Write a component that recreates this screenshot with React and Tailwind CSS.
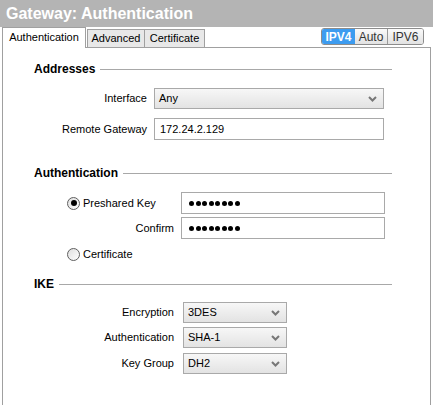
import React from 'react'

const font = { fontFamily: '"Liberation Sans", Arial, sans-serif' }

const Chevron = () => (
  <svg width="9" height="6" viewBox="0 0 9 6" className="shrink-0">
    <polyline points="1,1 4.5,4.5 8,1" fill="none" stroke="#777" strokeWidth="2" />
  </svg>
)

const Select = ({ value, width }) => (
  <div
    className={`${width} h-[21px] flex items-center justify-between pl-[4px] pr-[6px] border border-[#a9a9a9] bg-gradient-to-b from-[#f7f7f7] to-[#e3e3e3] text-[11px] text-black`}
  >
    <span>{value}</span>
    <Chevron />
  </div>
)

const TextBox = ({ children, width }) => (
  <div className={`${width} h-[22px] flex items-center pl-[5px] border border-[#a9a9a9] bg-white text-[11px] text-black`}>
    {children}
  </div>
)

// password dots
const Dots = () => (
  <div className="flex items-center gap-[1.5px] pl-[2px]">
    {Array.from({ length: 8 }).map((_, i) => (
      <span key={i} className="w-[5px] h-[5px] rounded-full bg-black" />
    ))}
  </div>
)

const Radio = ({ checked }) => (
  <div className="w-[13px] h-[13px] rounded-full border border-[#5f5f5f] bg-gradient-to-br from-[#dedede] to-white flex items-center justify-center shrink-0">
    {checked && <div className="w-[6px] h-[6px] rounded-full bg-black" />}
  </div>
)

const Heading = ({ children, className = '' }) => (
  <div className={`flex items-center h-[16px] w-[358px] ${className}`}>
    <span className="font-bold text-[12px] text-black">{children}</span>
    <div className="flex-1 h-px bg-[#a8a8a8] ml-[5px]" />
  </div>
)

const Row = ({ label, labelWidth, gap, className = '', children }) => (
  <div className={`flex items-center ${className}`}>
    <div className={`${labelWidth} text-right text-[11px] text-black`}>{label}</div>
    <div className={gap}>{children}</div>
  </div>
)

export default function App() {
  return (
    <div className="w-[433px] h-[405px] bg-white overflow-hidden" style={font}>
      {/* Title */}
      <div className="h-[27px] bg-[#b4b4b4] pl-[6px] flex items-center text-white font-bold text-[16px]">
        Gateway: Authentication
      </div>

      {/* Tabs */}
      <div className="flex justify-between h-[20px] pl-[2px] pr-[9px]">
        <div className="flex items-end">
          <div className="relative z-10 w-[84px] h-[21px] -mb-px bg-white border border-b-0 border-[#a0a0a0] flex items-center justify-center text-[11px] text-black pb-[2px]">
            Authentication
          </div>
          <div className="w-[58px] h-[18px] bg-[#e8e8e8] border border-b-0 border-[#a0a0a0] ml-px flex items-center justify-center text-[11px] text-black">
            Advanced
          </div>
          <div className="w-[60px] h-[18px] bg-[#e8e8e8] border border-b-0 border-l-0 border-[#a0a0a0] flex items-center justify-center text-[11px] text-black">
            Certificate
          </div>
        </div>
        <div className="mt-px h-[17px] flex border border-[#8c8c8c] rounded-[3px] overflow-hidden text-[12px]">
          <div className="w-[33px] bg-[#3d9cf0] text-white font-bold flex items-center justify-center">IPV4</div>
          <div className="w-[33px] bg-gradient-to-b from-[#fafafa] to-[#e2e2e2] text-[#333] flex items-center justify-center border-r border-[#9a9a9a]">
            Auto
          </div>
          <div className="w-[35px] bg-gradient-to-b from-[#fafafa] to-[#e2e2e2] text-[#333] flex items-center justify-center">
            IPV6
          </div>
        </div>
      </div>

      {/* Panel */}
      <div className="ml-[2px] w-[429px] h-[420px] border border-[#a0a0a0] pl-[31px] pt-[13px]">
        <Heading>Addresses</Heading>
        <Row label="Interface" labelWidth="w-[113px]" gap="ml-[7px]" className="mt-[11px]">
          <Select value="Any" width="w-[230px]" />
        </Row>
        <Row label="Remote Gateway" labelWidth="w-[113px]" gap="ml-[7px]" className="mt-[9px]">
          <TextBox width="w-[230px]">172.24.2.129</TextBox>
        </Row>

        <Heading className="mt-[25px]">Authentication</Heading>
        <div className="flex items-center mt-[11px]">
          <div className="w-[147px] flex items-center pl-[33px] text-[11px] text-black">
            <Radio checked />
            <span className="ml-[3px]">Preshared Key</span>
          </div>
          <TextBox width="w-[204px]">
            <Dots />
          </TextBox>
        </div>
        <Row label="Confirm" labelWidth="w-[140px]" gap="ml-[7px]" className="mt-[3px]">
          <TextBox width="w-[204px]">
            <Dots />
          </TextBox>
        </Row>
        <div className="flex items-center h-[16px] mt-[7px] pl-[33px] text-[11px] text-black">
          <Radio />
          <span className="ml-[3px]">Certificate</span>
        </div>

        <Heading className="mt-[14px]">IKE</Heading>
        <Row label="Encryption" labelWidth="w-[140px]" gap="ml-[9px]" className="mt-[10px]">
          <Select value="3DES" width="w-[104px]" />
        </Row>
        <Row label="Authentication" labelWidth="w-[140px]" gap="ml-[9px]" className="mt-[4px]">
          <Select value="SHA-1" width="w-[104px]" />
        </Row>
        <Row label="Key Group" labelWidth="w-[140px]" gap="ml-[9px]" className="mt-[5px]">
          <Select value="DH2" width="w-[104px]" />
        </Row>
      </div>
    </div>
  )
}
